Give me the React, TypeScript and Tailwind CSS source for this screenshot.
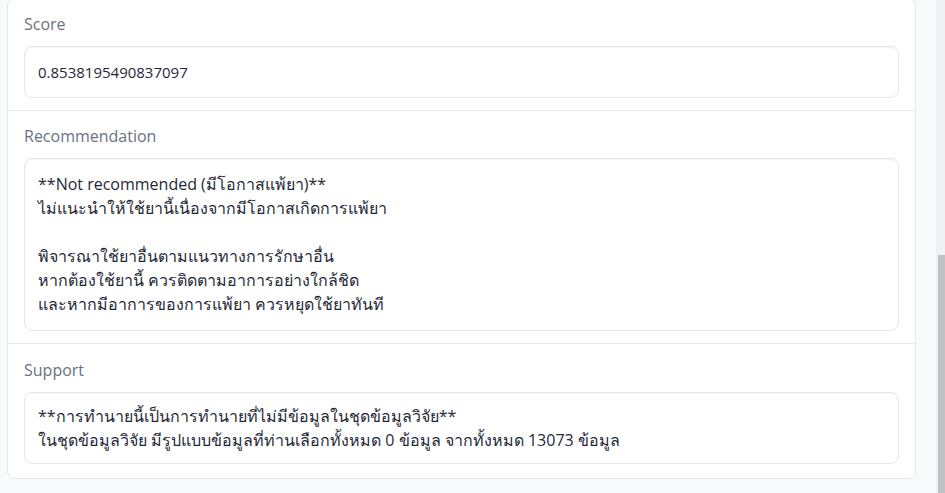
import React from 'react';

const fontStack = { fontFamily: '"Source Sans Pro", "Open Sans", "Noto Sans", sans-serif' };

interface FieldProps {
  label: string;
  lines: string[];
  textClass: string;
  boxClass: string;
  last?: boolean;
}

const Field: React.FC<FieldProps> = ({ label, lines, textClass, boxClass, last }) => (
  <div className={`px-4 ${last ? 'pt-[14px] pb-[14px]' : 'pt-[13px] pb-[12px] border-b border-[#e5e7eb]'}`}>
    <div className="h-6 leading-6 text-[16px] text-[#6b7280]">{label}</div>
    <div className={`mt-[10px] rounded-lg border border-[#e5e7eb] bg-white px-[13px] shadow-[inset_0_1px_2px_rgba(0,0,0,0.04)] ${boxClass}`}>
      {lines.map((line, i) => (
        <div key={i} className={`min-h-6 leading-6 text-[#1f2937] whitespace-pre-wrap ${textClass}`}>
          {line}
        </div>
      ))}
    </div>
  </div>
);

export default function App() {
  return (
    <div className="flex h-[493px] w-[945px] overflow-hidden bg-[#f9fafb]" style={fontStack}>
      <div className="flex-1 pl-[7px] pr-[20px]">
        <div className="-mt-[2px] rounded-lg border border-[#e5e7eb] bg-white">
          <Field
            label="Score"
            textClass="text-[15px]"
            boxClass="pt-[13px] pb-[13px]"
            lines={['0.8538195490837097']}
          />
          <Field
            label="Recommendation"
            textClass="text-[16px]"
            boxClass="pt-[13px] pb-[14px]"
            lines={[
              '**Not recommended (มีโอกาสแพ้ยา)**',
              'ไม่แนะนำให้ใช้ยานี้เนื่องจากมีโอกาสเกิดการแพ้ยา',
              '',
              'พิจารณาใช้ยาอื่นตามแนวทางการรักษาอื่น',
              'หากต้องใช้ยานี้ ควรติดตามอาการอย่างใกล้ชิด',
              'และหากมีอาการของการแพ้ยา ควรหยุดใช้ยาทันที',
            ]}
          />
          <Field
            label="Support"
            last
            textClass="text-[16px]"
            boxClass="pt-[11px] pb-[11px]"
            lines={[
              '**การทำนายนี้เป็นการทำนายที่ไม่มีข้อมูลในชุดข้อมูลวิจัย**',
              'ในชุดข้อมูลวิจัย มีรูปแบบข้อมูลที่ท่านเลือกทั้งหมด 0 ข้อมูล จากทั้งหมด 13073 ข้อมูล',
            ]}
          />
        </div>
      </div>
      <div className="flex w-[9px] flex-col bg-[#f1f1f1]">
        <div className="h-[255px]" />
        <div className="ml-[2px] flex-1 bg-[#c1c1c1]" />
      </div>
    </div>
  );
}
